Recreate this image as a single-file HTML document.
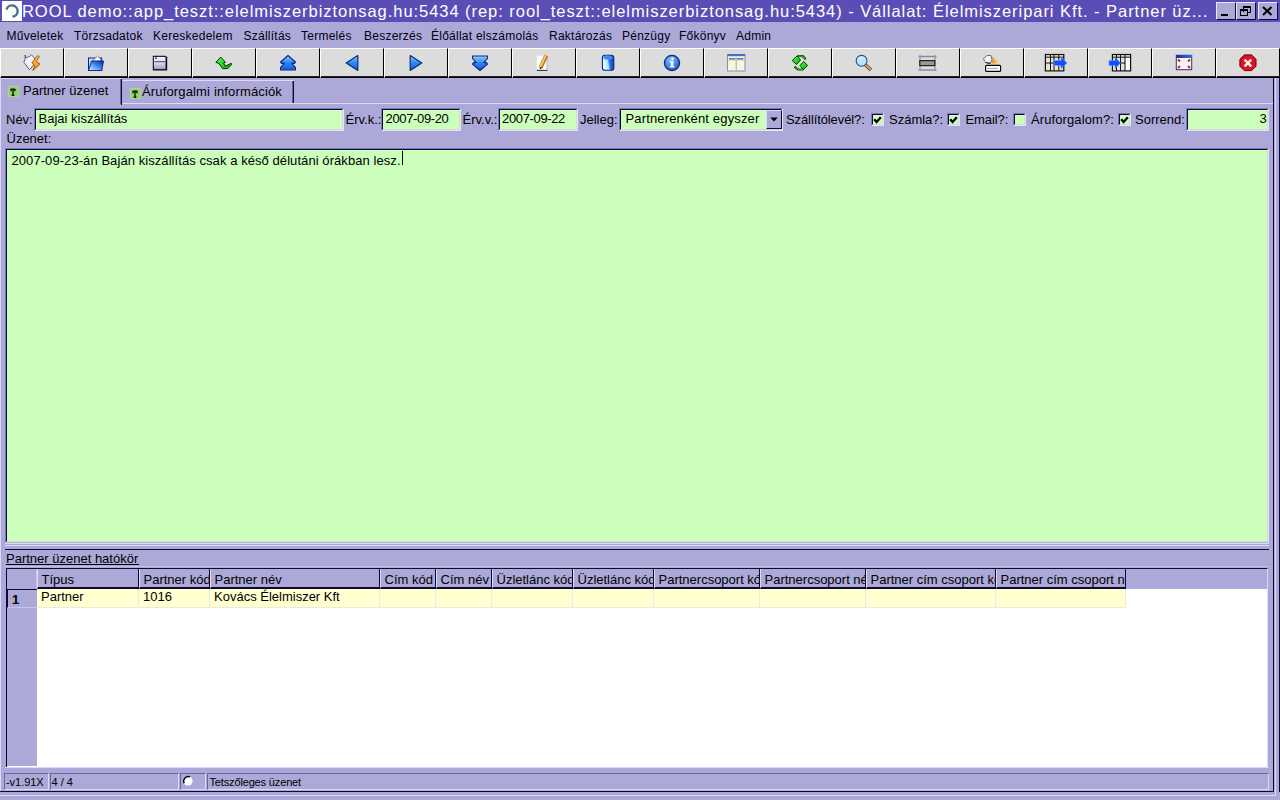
<!DOCTYPE html>
<html><head><meta charset="utf-8">
<style>
*{box-sizing:border-box;margin:0;padding:0}
html,body{width:1280px;height:800px;overflow:hidden;background:#aca8d8;font-family:"Liberation Sans",sans-serif;color:#000}
div{position:absolute}
svg{position:absolute}
.t{white-space:nowrap;line-height:1}
</style></head><body>
<div style="left:0px;top:0px;width:1280px;height:22px;background:#5a4eb6"></div>
<div style="left:2px;top:1px;width:20px;height:20px;background:#fbfdfb"></div>
<svg style="left:2px;top:1px" width="20" height="20"><path d="M4.6 8.6 A5.6 5.6 0 1 1 10.5 15.6" fill="none" stroke="#4f6f8f" stroke-width="2.4"/></svg>
<div class="t" style="left:22px;top:2.5px;font-size:16.5px;color:#fff;letter-spacing:0.95px">ROOL demo::app_teszt::elelmiszerbiztonsag.hu:5434 (rep: rool_teszt::elelmiszerbiztonsag.hu:5434) - Vállalat: Élelmiszeripari Kft. - Partner üz...</div>
<div style="left:1216px;top:2px;width:20px;height:18px;background:#aca8d8;border-top:1px solid #e8e6ff;border-left:1px solid #e8e6ff;border-right:1px solid #0c0a30;border-bottom:1px solid #0c0a30"></div>
<div style="left:1236px;top:2px;width:20px;height:18px;background:#aca8d8;border-top:1px solid #e8e6ff;border-left:1px solid #e8e6ff;border-right:1px solid #0c0a30;border-bottom:1px solid #0c0a30"></div>
<div style="left:1258px;top:2px;width:20px;height:18px;background:#aca8d8;border-top:1px solid #e8e6ff;border-left:1px solid #e8e6ff;border-right:1px solid #0c0a30;border-bottom:1px solid #0c0a30"></div>
<div style="left:1221px;top:14px;width:7px;height:2px;background:#000"></div>
<svg style="left:1240px;top:5px" width="12" height="12"><path d="M3.5 1v6 M3 1.5h7.5v6h-2.5 M3 2.5h7" fill="none" stroke="#000" stroke-width="1"/><rect x="0.5" y="4.5" width="7" height="6" fill="none" stroke="#000"/><path d="M0 5.5h8" stroke="#000"/></svg>
<svg style="left:1262px;top:6px" width="11" height="10"><path d="M1 1L9.5 9M9.5 1L1 9" stroke="#000" stroke-width="2"/></svg>
<div class="t" style="left:6.5px;top:30px;font-size:12px;letter-spacing:0.25px;color:#000010">Műveletek</div>
<div class="t" style="left:74px;top:30px;font-size:12px;letter-spacing:0.25px;color:#000010">Törzsadatok</div>
<div class="t" style="left:153px;top:30px;font-size:12px;letter-spacing:0.25px;color:#000010">Kereskedelem</div>
<div class="t" style="left:243.5px;top:30px;font-size:12px;letter-spacing:0.25px;color:#000010">Szállítás</div>
<div class="t" style="left:301px;top:30px;font-size:12px;letter-spacing:0.25px;color:#000010">Termelés</div>
<div class="t" style="left:364px;top:30px;font-size:12px;letter-spacing:0.25px;color:#000010">Beszerzés</div>
<div class="t" style="left:431px;top:30px;font-size:12px;letter-spacing:0.25px;color:#000010">Élőállat elszámolás</div>
<div class="t" style="left:549px;top:30px;font-size:12px;letter-spacing:0.25px;color:#000010">Raktározás</div>
<div class="t" style="left:622px;top:30px;font-size:12px;letter-spacing:0.25px;color:#000010">Pénzügy</div>
<div class="t" style="left:679px;top:30px;font-size:12px;letter-spacing:0.25px;color:#000010">Főkönyv</div>
<div class="t" style="left:736px;top:30px;font-size:12px;letter-spacing:0.25px;color:#000010">Admin</div>
<div style="left:0px;top:48px;width:64px;height:30px;background:#dcdcdc;border-top:1px solid #fff;border-left:1px solid #fff;border-right:1px solid #000;border-bottom:1px solid #000"></div>
<div style="left:1px;top:76px;width:63px;height:1px;background:#202020"></div>
<div style="left:64px;top:48px;width:64px;height:30px;background:#dcdcdc;border-top:1px solid #fff;border-left:1px solid #fff;border-right:1px solid #000;border-bottom:1px solid #000"></div>
<div style="left:65px;top:76px;width:63px;height:1px;background:#202020"></div>
<div style="left:128px;top:48px;width:64px;height:30px;background:#dcdcdc;border-top:1px solid #fff;border-left:1px solid #fff;border-right:1px solid #000;border-bottom:1px solid #000"></div>
<div style="left:129px;top:76px;width:63px;height:1px;background:#202020"></div>
<div style="left:192px;top:48px;width:64px;height:30px;background:#dcdcdc;border-top:1px solid #fff;border-left:1px solid #fff;border-right:1px solid #000;border-bottom:1px solid #000"></div>
<div style="left:193px;top:76px;width:63px;height:1px;background:#202020"></div>
<div style="left:256px;top:48px;width:64px;height:30px;background:#dcdcdc;border-top:1px solid #fff;border-left:1px solid #fff;border-right:1px solid #000;border-bottom:1px solid #000"></div>
<div style="left:257px;top:76px;width:63px;height:1px;background:#202020"></div>
<div style="left:320px;top:48px;width:64px;height:30px;background:#dcdcdc;border-top:1px solid #fff;border-left:1px solid #fff;border-right:1px solid #000;border-bottom:1px solid #000"></div>
<div style="left:321px;top:76px;width:63px;height:1px;background:#202020"></div>
<div style="left:384px;top:48px;width:64px;height:30px;background:#dcdcdc;border-top:1px solid #fff;border-left:1px solid #fff;border-right:1px solid #000;border-bottom:1px solid #000"></div>
<div style="left:385px;top:76px;width:63px;height:1px;background:#202020"></div>
<div style="left:448px;top:48px;width:64px;height:30px;background:#dcdcdc;border-top:1px solid #fff;border-left:1px solid #fff;border-right:1px solid #000;border-bottom:1px solid #000"></div>
<div style="left:449px;top:76px;width:63px;height:1px;background:#202020"></div>
<div style="left:512px;top:48px;width:64px;height:30px;background:#dcdcdc;border-top:1px solid #fff;border-left:1px solid #fff;border-right:1px solid #000;border-bottom:1px solid #000"></div>
<div style="left:513px;top:76px;width:63px;height:1px;background:#202020"></div>
<div style="left:576px;top:48px;width:64px;height:30px;background:#dcdcdc;border-top:1px solid #fff;border-left:1px solid #fff;border-right:1px solid #000;border-bottom:1px solid #000"></div>
<div style="left:577px;top:76px;width:63px;height:1px;background:#202020"></div>
<div style="left:640px;top:48px;width:64px;height:30px;background:#dcdcdc;border-top:1px solid #fff;border-left:1px solid #fff;border-right:1px solid #000;border-bottom:1px solid #000"></div>
<div style="left:641px;top:76px;width:63px;height:1px;background:#202020"></div>
<div style="left:704px;top:48px;width:64px;height:30px;background:#dcdcdc;border-top:1px solid #fff;border-left:1px solid #fff;border-right:1px solid #000;border-bottom:1px solid #000"></div>
<div style="left:705px;top:76px;width:63px;height:1px;background:#202020"></div>
<div style="left:768px;top:48px;width:64px;height:30px;background:#dcdcdc;border-top:1px solid #fff;border-left:1px solid #fff;border-right:1px solid #000;border-bottom:1px solid #000"></div>
<div style="left:769px;top:76px;width:63px;height:1px;background:#202020"></div>
<div style="left:832px;top:48px;width:64px;height:30px;background:#dcdcdc;border-top:1px solid #fff;border-left:1px solid #fff;border-right:1px solid #000;border-bottom:1px solid #000"></div>
<div style="left:833px;top:76px;width:63px;height:1px;background:#202020"></div>
<div style="left:896px;top:48px;width:64px;height:30px;background:#dcdcdc;border-top:1px solid #fff;border-left:1px solid #fff;border-right:1px solid #000;border-bottom:1px solid #000"></div>
<div style="left:897px;top:76px;width:63px;height:1px;background:#202020"></div>
<div style="left:960px;top:48px;width:64px;height:30px;background:#dcdcdc;border-top:1px solid #fff;border-left:1px solid #fff;border-right:1px solid #000;border-bottom:1px solid #000"></div>
<div style="left:961px;top:76px;width:63px;height:1px;background:#202020"></div>
<div style="left:1024px;top:48px;width:64px;height:30px;background:#dcdcdc;border-top:1px solid #fff;border-left:1px solid #fff;border-right:1px solid #000;border-bottom:1px solid #000"></div>
<div style="left:1025px;top:76px;width:63px;height:1px;background:#202020"></div>
<div style="left:1088px;top:48px;width:64px;height:30px;background:#dcdcdc;border-top:1px solid #fff;border-left:1px solid #fff;border-right:1px solid #000;border-bottom:1px solid #000"></div>
<div style="left:1089px;top:76px;width:63px;height:1px;background:#202020"></div>
<div style="left:1152px;top:48px;width:64px;height:30px;background:#dcdcdc;border-top:1px solid #fff;border-left:1px solid #fff;border-right:1px solid #000;border-bottom:1px solid #000"></div>
<div style="left:1153px;top:76px;width:63px;height:1px;background:#202020"></div>
<div style="left:1216px;top:48px;width:64px;height:30px;background:#dcdcdc;border-top:1px solid #fff;border-left:1px solid #fff;border-right:1px solid #000;border-bottom:1px solid #000"></div>
<div style="left:1217px;top:76px;width:63px;height:1px;background:#202020"></div>
<svg style="left:0;top:0;width:0;height:0"><defs><linearGradient id="gblue" x1="0" y1="0" x2="0" y2="1"><stop offset="0" stop-color="#8cd0ff"/><stop offset="0.5" stop-color="#2a86f0"/><stop offset="1" stop-color="#1a5ad8"/></linearGradient><linearGradient id="gfold" x1="0" y1="1" x2="1" y2="0"><stop offset="0" stop-color="#d0f8ff"/><stop offset="0.55" stop-color="#4080f0"/><stop offset="1" stop-color="#0020b0"/></linearGradient><linearGradient id="gflop" x1="0" y1="0" x2="0" y2="1"><stop offset="0" stop-color="#f4f4ff"/><stop offset="0.5" stop-color="#d8d8f0"/><stop offset="1" stop-color="#a0a0c0"/></linearGradient><linearGradient id="gdb" x1="0" y1="0.2" x2="1" y2="0"><stop offset="0" stop-color="#e8ffff"/><stop offset="0.4" stop-color="#a8e4ff"/><stop offset="0.55" stop-color="#3070e8"/><stop offset="1" stop-color="#0030c0"/></linearGradient><radialGradient id="ginfo" cx="0.4" cy="0.3" r="0.7"><stop offset="0" stop-color="#80c8ff"/><stop offset="1" stop-color="#1a58d0"/></radialGradient><linearGradient id="gwin" x1="0" y1="0" x2="1" y2="0"><stop offset="0" stop-color="#1030a0"/><stop offset="1" stop-color="#3070e0"/></linearGradient><linearGradient id="gbolt" x1="0" y1="0" x2="0" y2="1"><stop offset="0" stop-color="#f8d040"/><stop offset="1" stop-color="#f08010"/></linearGradient><linearGradient id="ggreen" x1="0" y1="0" x2="1" y2="1"><stop offset="0" stop-color="#50ff50"/><stop offset="1" stop-color="#00b000"/></linearGradient><linearGradient id="gdish" x1="0" y1="0" x2="1" y2="0"><stop offset="0" stop-color="#f09030"/><stop offset="1" stop-color="#f8e8c0"/></linearGradient></defs></svg>
<svg style="left:0px;top:48px" width="64" height="29" viewBox="0 0 64 29"><path d="M25.2 7 L25.7 10 L29.6 8.4 L31.4 6.9 L34.6 10 L34 16.5 L29.6 21.8 L23.9 14.4 L25.2 10.6 Z" fill="#f2f2fc" stroke="#50506a" stroke-width="0.9" stroke-linejoin="round"/><path d="M37.6 7.6 L39.4 8.4 L36.3 13.6 L40.2 16 L32.8 22.6 L34.6 17.6 L31.8 15 Z" fill="url(#gbolt)" stroke="#a04000" stroke-width="0.8" stroke-linejoin="round"/></svg>
<svg style="left:64px;top:48px" width="64" height="29" viewBox="0 0 64 29"><rect x="24.5" y="10" width="13.2" height="12.5" fill="#b8e4ff" stroke="#102080" stroke-width="1"/><path d="M28 13.2 L33.5 8.1 L37 11.5 L36 13.2z" fill="#fafaff" stroke="#605878" stroke-width="0.7"/><path d="M27.5 13 h12 l-1.8 9.5 h-13.2z" fill="url(#gfold)" stroke="#102080" stroke-width="0.9" stroke-linejoin="round"/></svg>
<svg style="left:128px;top:48px" width="64" height="29" viewBox="0 0 64 29"><path d="M24.8 7.8 h13 l1.4 1.4 v13.2 h-14.4z" fill="#10101c"/><rect x="25.9" y="8.9" width="11.6" height="12.2" fill="url(#gflop)"/><path d="M26.5 13.7h10.5" stroke="#505070" stroke-width="1.1"/><circle cx="28" cy="10.2" r="0.9" fill="#303040"/></svg>
<svg style="left:192px;top:48px" width="64" height="29" viewBox="0 0 64 29"><path d="M28.7 9 L33.5 14.4 L31.6 14.8 L33 18.2 L39.3 15.3 L39.7 16.6 L35.6 20.6 L30.4 20.6 L27 15.5 L23.9 14.4 Z" fill="url(#ggreen)" stroke="#003a00" stroke-width="1" stroke-linejoin="round"/></svg>
<svg style="left:256px;top:48px" width="64" height="29" viewBox="0 0 64 29"><path d="M32 7.5 L39.5 14 L38.5 15.4 L35.8 15.4 L39.5 19.6 L39.5 22 L24.5 22 L24.5 19.6 L28.2 15.4 L25.5 15.4 L24.5 14 Z" fill="url(#gblue)" stroke="#0a2a78" stroke-width="1.1" stroke-linejoin="round"/></svg>
<svg style="left:320px;top:48px" width="64" height="29" viewBox="0 0 64 29"><path d="M26.2 15 L37.8 7.6 L37.8 22.4 Z" fill="url(#gblue)" stroke="#0a2a78" stroke-width="1.2" stroke-linejoin="round"/></svg>
<svg style="left:384px;top:48px" width="64" height="29" viewBox="0 0 64 29"><path d="M26.2 7.6 L37.8 15 L26.2 22.4 Z" fill="url(#gblue)" stroke="#0a2a78" stroke-width="1.2" stroke-linejoin="round"/></svg>
<svg style="left:448px;top:48px" width="64" height="29" viewBox="0 0 64 29"><path d="M32 22.5 L39.5 16 L38.5 14.6 L35.8 14.6 L39.5 10.4 L39.5 8 L24.5 8 L24.5 10.4 L28.2 14.6 L25.5 14.6 L24.5 16 Z" fill="url(#gblue)" stroke="#0a2a78" stroke-width="1.1" stroke-linejoin="round"/></svg>
<svg style="left:512px;top:48px" width="64" height="29" viewBox="0 0 64 29"><rect x="24.8" y="7.8" width="10.8" height="14.7" fill="#fcfcff"/><path d="M24.8 22.4h10.8" stroke="#303040" stroke-width="1.1"/><path d="M35.1 8v14.5" stroke="#a8b0c8" stroke-width="1"/><path d="M34.3 7.4 L28.6 19.6" stroke="#c07810" stroke-width="4"/><path d="M33.8 7.4 L28.1 19.4" stroke="#f8d070" stroke-width="1.8"/><path d="M29 19.2 L28.2 20.8" stroke="#403020" stroke-width="1.8"/></svg>
<svg style="left:576px;top:48px" width="64" height="29" viewBox="0 0 64 29"><rect x="26.4" y="7.3" width="11.4" height="15" rx="2.6" ry="2.6" fill="url(#gdb)" stroke="#0a2a78" stroke-width="1.1"/><ellipse cx="32" cy="9.6" rx="4.6" ry="2.2" fill="#3a8ef0"/></svg>
<svg style="left:640px;top:48px" width="64" height="29" viewBox="0 0 64 29"><circle cx="32" cy="15" r="7.6" fill="url(#ginfo)" stroke="#0a2a78" stroke-width="1.2"/><circle cx="32.6" cy="10.8" r="1.4" fill="#fff"/><path d="M30.2 13h3.2v5.3h1.1v1.3h-4.8v-1.3h1.1v-4h-0.6z" fill="#fff"/></svg>
<svg style="left:704px;top:48px" width="64" height="29" viewBox="0 0 64 29"><rect x="23.5" y="6.5" width="17.5" height="16.5" fill="#f6f6e0" stroke="#8890a8" stroke-width="1"/><rect x="23.5" y="6" width="17.5" height="2.2" fill="#4070d0"/><path d="M25 10.8h6.5M33 10.8h6.5" stroke="#405070" stroke-width="1.2"/><path d="M24 12h16.5" stroke="#e0a0a0" stroke-width="0.6"/><path d="M32.2 9v13.5" stroke="#a0a8b8" stroke-width="1"/></svg>
<svg style="left:768px;top:48px" width="64" height="29" viewBox="0 0 64 29"><path d="M29 8 L35 8.2 L37.7 11.4" fill="none" stroke="#003a00" stroke-width="2.2" stroke-linejoin="round"/><path d="M29 8 L35 8.2 L37.5 11.2" fill="none" stroke="#30e030" stroke-width="0.9"/><path d="M24.2 12.6 L29 8 L32.5 12 L28.5 16.5 Z" fill="url(#ggreen)" stroke="#003a00" stroke-width="1" stroke-linejoin="round"/><path d="M35.5 21.5 L30 21.5 L26.5 18.6" fill="none" stroke="#003a00" stroke-width="2.2" stroke-linejoin="round"/><path d="M35.5 21.3 L30.2 21.3 L26.8 18.6" fill="none" stroke="#30e030" stroke-width="0.9"/><path d="M39.6 17.5 L35.7 13.5 L32 17.5 L35.5 21.6 Z" fill="url(#ggreen)" stroke="#003a00" stroke-width="1" stroke-linejoin="round"/></svg>
<svg style="left:832px;top:48px" width="64" height="29" viewBox="0 0 64 29"><path d="M33.5 17 L39 22" stroke="#503010" stroke-width="3.4"/><path d="M33.5 17 L39 22" stroke="#e0a050" stroke-width="2"/><circle cx="29.6" cy="12.8" r="5.4" fill="#b8e4ff" stroke="#305080" stroke-width="1.1"/><path d="M27 11 A3 3 0 0 1 30 9.5" stroke="#fff" stroke-width="1" fill="none"/></svg>
<svg style="left:896px;top:48px" width="64" height="29" viewBox="0 0 64 29"><path d="M22.5 8.5h18M22.5 22h18" stroke="#8a86a8" stroke-width="1.6"/><path d="M24 7v16M39 7v16" stroke="#9490b0" stroke-width="1.2"/><rect x="23.8" y="12.6" width="15" height="5" fill="#9a9a90" stroke="#202020" stroke-width="1.2"/></svg>
<svg style="left:960px;top:48px" width="64" height="29" viewBox="0 0 64 29"><path d="M23.5 10.5 Q25 16 30.5 15.3 Q33 12 31 7.5 Q27 6 23.5 10.5z" fill="#f4f4f8" stroke="#606070" stroke-width="0.9"/><path d="M25.5 14.5 L30.5 15.3" stroke="#303040" stroke-width="1.2"/><path d="M32 8.5 L32 15.5 L40 15.5 Z" fill="url(#gdish)"/><rect x="25.6" y="17.4" width="15" height="6" rx="1" fill="#fff" stroke="#000" stroke-width="1.1"/><path d="M27.5 20.4h10.5" stroke="#404040" stroke-width="1" stroke-dasharray="1 1"/></svg>
<svg style="left:1024px;top:48px" width="64" height="29" viewBox="0 0 64 29"><rect x="21.4" y="6.5" width="18.4" height="16.4" fill="#e8e4d4" stroke="#101010" stroke-width="1.2"/><path d="M26.5 6.5v16.4M30 6.5v16.4M34.8 6.5v16.4M21.4 9.2h18.4M21.4 15h18.4" stroke="#101010" stroke-width="1"/><path d="M30 12.5h7v-3.2l6 5.7-6 5.7v-3.2h-7z" fill="#1050ff" stroke="#70a0ff" stroke-width="0.6"/></svg>
<svg style="left:1088px;top:48px" width="64" height="29" viewBox="0 0 64 29"><rect x="24.4" y="6.5" width="18.2" height="16.4" fill="#e8e4d4" stroke="#101010" stroke-width="1.2"/><rect x="37.5" y="9.5" width="4.5" height="12.5" fill="#ffffff"/><path d="M28.5 6.5v16.4M32.5 6.5v16.4M37 6.5v16.4M24.4 9.2h18.2M24.4 15h13" stroke="#101010" stroke-width="1"/><path d="M21 12.5h6v-3.2l5.5 5.7-5.5 5.7v-3.2h-6z" fill="#1050ff" stroke="#70a0ff" stroke-width="0.6"/></svg>
<svg style="left:1152px;top:48px" width="64" height="29" viewBox="0 0 64 29"><rect x="24.3" y="7.3" width="15.4" height="14.4" fill="#fff4f4" stroke="#303070" stroke-width="1"/><rect x="24.3" y="7" width="15.4" height="3" fill="url(#gwin)"/><path d="M26 11.5l2 2M38 11.5l-2 2M26 20l2-2M38 20l-2-2" stroke="#a03030" stroke-width="1.8"/></svg>
<svg style="left:1216px;top:48px" width="64" height="29" viewBox="0 0 64 29"><path d="M28.4 6.9h7.2l4.4 4.4v7l-4.4 4.3h-7.2l-4.5-4.3v-7z" fill="#e01020" stroke="#600010" stroke-width="1"/><path d="M28.6 11.6l6.6 6.8M35.2 11.6l-6.6 6.8" stroke="#fff4f0" stroke-width="2.5"/></svg>
<div style="left:122px;top:80px;width:172px;height:24px;background:#aca8d8;border-top:1px solid #dcd8ff"></div>
<div style="left:293px;top:81px;width:1px;height:22px;background:#0c0a30"></div>
<div style="left:292px;top:81px;width:1px;height:22px;background:#6a64a8"></div>
<div style="left:0px;top:78px;width:122px;height:27px;background:#aca8d8;border-top:1px solid #dcd8ff;border-left:1px solid #dcd8ff"></div>
<div style="left:121px;top:79px;width:1px;height:26px;background:#0c0a30"></div>
<div style="left:120px;top:79px;width:1px;height:25px;background:#6a64a8"></div>
<div style="left:7.5px;top:86px;width:11px;height:11px;background:#a8d890;border-radius:2px;box-shadow:0 0 1px #a8d890"></div>
<div style="left:8.5px;top:87px;width:9px;height:9px;background:#98d070"></div>
<svg style="left:8px;top:86.5px" width="10" height="10"><path d="M2.6 2.2h4.8M3.1 2v2.2M6.9 2v2.2M5 2.2v6.2M3.6 8.3h2.8" stroke="#002000" stroke-width="1.4" fill="none"/></svg>
<div class="t" style="left:23px;top:83.5px;font-size:13px;">Partner üzenet</div>
<div style="left:129.5px;top:88px;width:11px;height:11px;background:#a8d890;border-radius:2px;box-shadow:0 0 1px #a8d890"></div>
<div style="left:130.5px;top:89px;width:9px;height:9px;background:#98d070"></div>
<svg style="left:130px;top:88.5px" width="10" height="10"><path d="M2.6 2.2h4.8M3.1 2v2.2M6.9 2v2.2M5 2.2v6.2M3.6 8.3h2.8" stroke="#002000" stroke-width="1.4" fill="none"/></svg>
<div class="t" style="left:142px;top:85.3px;font-size:13px;letter-spacing:0.15px">Áruforgalmi információk</div>
<div style="left:122px;top:103px;width:1151px;height:1px;background:#dcd8ff"></div>
<div style="left:0px;top:78px;width:1px;height:713px;background:#dcd8ff"></div>
<div style="left:1273px;top:78px;width:1px;height:714px;background:#0c0a30"></div>
<div style="left:1275px;top:78px;width:1px;height:718px;background:#dcd8ff"></div>
<div style="left:1279px;top:78px;width:1px;height:714px;background:#0c0a30"></div>
<div style="left:0px;top:791px;width:1274px;height:1px;background:#0c0a30"></div>
<div style="left:0px;top:795px;width:1276px;height:1px;background:#dcd8ff"></div>
<div class="t" style="left:6px;top:112.5px;font-size:13px;">Név:</div>
<div style="left:34px;top:108px;width:310px;height:23px;background:#ccffbb;border-top:1px solid #7c76bc;border-left:1px solid #7c76bc;border-right:1px solid #e4e2ff;border-bottom:1px solid #e4e2ff"></div>
<div style="left:35px;top:109px;width:308px;height:21px;background:#ccffbb;border-top:1px solid #0c0a30;border-left:1px solid #0c0a30;border-right:1px solid #d4dcd0;border-bottom:1px solid #d4dcd0"></div>
<div class="t" style="left:38.5px;top:112px;font-size:13px;">Bajai kiszállítás</div>
<div class="t" style="left:345.5px;top:112.5px;font-size:13px;">Érv.k.:</div>
<div style="left:381px;top:108px;width:80px;height:23px;background:#ccffbb;border-top:1px solid #7c76bc;border-left:1px solid #7c76bc;border-right:1px solid #e4e2ff;border-bottom:1px solid #e4e2ff"></div>
<div style="left:382px;top:109px;width:78px;height:21px;background:#ccffbb;border-top:1px solid #0c0a30;border-left:1px solid #0c0a30;border-right:1px solid #d4dcd0;border-bottom:1px solid #d4dcd0"></div>
<div class="t" style="left:385.5px;top:112px;font-size:13px;letter-spacing:-0.35px">2007-09-20</div>
<div class="t" style="left:462.5px;top:112.5px;font-size:13px;">Érv.v.:</div>
<div style="left:498px;top:108px;width:80px;height:23px;background:#ccffbb;border-top:1px solid #7c76bc;border-left:1px solid #7c76bc;border-right:1px solid #e4e2ff;border-bottom:1px solid #e4e2ff"></div>
<div style="left:499px;top:109px;width:78px;height:21px;background:#ccffbb;border-top:1px solid #0c0a30;border-left:1px solid #0c0a30;border-right:1px solid #d4dcd0;border-bottom:1px solid #d4dcd0"></div>
<div class="t" style="left:502px;top:112px;font-size:13px;letter-spacing:-0.35px">2007-09-22</div>
<div class="t" style="left:580px;top:112.5px;font-size:13px;">Jelleg:</div>
<div style="left:619px;top:108px;width:164px;height:23px;background:#ccffbb;border-top:1px solid #7c76bc;border-left:1px solid #7c76bc;border-right:1px solid #e4e2ff;border-bottom:1px solid #e4e2ff"></div>
<div style="left:620px;top:109px;width:162px;height:21px;background:#ccffbb;border-top:1px solid #0c0a30;border-left:1px solid #0c0a30;border-right:1px solid #d4dcd0;border-bottom:1px solid #d4dcd0"></div>
<div class="t" style="left:625.5px;top:112px;font-size:13px;letter-spacing:0.15px">Partnerenként egyszer</div>
<div style="left:766px;top:110px;width:16px;height:19px;background:#aca8d8;border-top:1px solid #dcd8ff;border-left:1px solid #dcd8ff;border-right:1px solid #0c0a30;border-bottom:1px solid #0c0a30"></div>
<svg style="left:769.5px;top:116.5px" width="9" height="6"><path d="M0.2 0.5h7.6l-3.8 4z" fill="#000"/></svg>
<div class="t" style="left:786px;top:112.5px;font-size:13px;letter-spacing:-0.1px">Szállítólevél?:</div>
<div style="left:871px;top:112.5px;width:13px;height:13px;background:#ccffbb;border-top:1px solid #7c76bc;border-left:1px solid #7c76bc;border-right:1px solid #e4e2ff;border-bottom:1px solid #e4e2ff"></div>
<div style="left:872px;top:113.5px;width:11px;height:11px;background:#ccffbb;border-top:1px solid #0c0a30;border-left:1px solid #0c0a30;border-right:1px solid #d4dcd0;border-bottom:1px solid #d4dcd0"></div>
<svg style="left:871px;top:112.5px" width="13" height="13"><path d="M3.2 6.2 L5.6 9 L9.8 4.2" stroke="#000" stroke-width="2.3" fill="none"/></svg>
<div class="t" style="left:889px;top:112.5px;font-size:13px;">Számla?:</div>
<div style="left:947px;top:112.5px;width:13px;height:13px;background:#ccffbb;border-top:1px solid #7c76bc;border-left:1px solid #7c76bc;border-right:1px solid #e4e2ff;border-bottom:1px solid #e4e2ff"></div>
<div style="left:948px;top:113.5px;width:11px;height:11px;background:#ccffbb;border-top:1px solid #0c0a30;border-left:1px solid #0c0a30;border-right:1px solid #d4dcd0;border-bottom:1px solid #d4dcd0"></div>
<svg style="left:947px;top:112.5px" width="13" height="13"><path d="M3.2 6.2 L5.6 9 L9.8 4.2" stroke="#000" stroke-width="2.3" fill="none"/></svg>
<div class="t" style="left:965.5px;top:112.5px;font-size:13px;letter-spacing:-0.1px">Email?:</div>
<div style="left:1013px;top:112.5px;width:13px;height:13px;background:#ccffbb;border-top:1px solid #7c76bc;border-left:1px solid #7c76bc;border-right:1px solid #e4e2ff;border-bottom:1px solid #e4e2ff"></div>
<div style="left:1014px;top:113.5px;width:11px;height:11px;background:#ccffbb;border-top:1px solid #0c0a30;border-left:1px solid #0c0a30;border-right:1px solid #d4dcd0;border-bottom:1px solid #d4dcd0"></div>
<div class="t" style="left:1031px;top:112.5px;font-size:13px;letter-spacing:0.1px">Áruforgalom?:</div>
<div style="left:1118px;top:112.5px;width:13px;height:13px;background:#ccffbb;border-top:1px solid #7c76bc;border-left:1px solid #7c76bc;border-right:1px solid #e4e2ff;border-bottom:1px solid #e4e2ff"></div>
<div style="left:1119px;top:113.5px;width:11px;height:11px;background:#ccffbb;border-top:1px solid #0c0a30;border-left:1px solid #0c0a30;border-right:1px solid #d4dcd0;border-bottom:1px solid #d4dcd0"></div>
<svg style="left:1118px;top:112.5px" width="13" height="13"><path d="M3.2 6.2 L5.6 9 L9.8 4.2" stroke="#000" stroke-width="2.3" fill="none"/></svg>
<div class="t" style="left:1135px;top:112.5px;font-size:13px;">Sorrend:</div>
<div style="left:1186px;top:108px;width:83px;height:23px;background:#ccffbb;border-top:1px solid #7c76bc;border-left:1px solid #7c76bc;border-right:1px solid #e4e2ff;border-bottom:1px solid #e4e2ff"></div>
<div style="left:1187px;top:109px;width:81px;height:21px;background:#ccffbb;border-top:1px solid #0c0a30;border-left:1px solid #0c0a30;border-right:1px solid #d4dcd0;border-bottom:1px solid #d4dcd0"></div>
<div class="t" style="left:1259.5px;top:112px;font-size:13px;">3</div>
<div class="t" style="left:6.5px;top:132px;font-size:13px;">Üzenet:</div>
<div style="left:5px;top:148px;width:1264px;height:395px;background:#ccffbb;border-top:1px solid #7c76bc;border-left:1px solid #7c76bc;border-right:1px solid #e4e2ff;border-bottom:1px solid #e4e2ff"></div>
<div style="left:6px;top:149px;width:1262px;height:393px;background:#ccffbb;border-top:1px solid #0c0a30;border-left:1px solid #0c0a30;border-right:1px solid #d4dcd0;border-bottom:1px solid #d4dcd0"></div>
<div style="left:5px;top:542px;width:1264px;height:1px;background:#b8bcd0"></div>
<div style="left:5px;top:543px;width:1264px;height:1px;background:#d8d8ff"></div>
<div class="t" style="left:11.5px;top:153.5px;font-size:13px;letter-spacing:0.07px">2007-09-23-án Baján kiszállítás csak a késő délutáni órákban lesz.</div>
<div style="left:402px;top:151px;width:1px;height:14px;background:#000"></div>
<div style="left:5px;top:545px;width:1264px;height:1px;background:#dcd8ff"></div>
<div style="left:5px;top:549px;width:1264px;height:1px;background:#0c0a30"></div>
<div class="t" style="left:6px;top:551.5px;font-size:13px;">Partner üzenet hatókör</div>
<div style="left:6px;top:564px;width:133px;height:1px;background:#000"></div>
<div style="left:5px;top:566px;width:1264px;height:1px;background:#c4c0ec"></div>
<div style="left:6px;top:568px;width:1262px;height:200px;background:#fff;border-top:1px solid #0c0a30;border-left:1px solid #0c0a30;border-right:1px solid #dcd8ff;border-bottom:1px solid #dcd8ff"></div>
<div style="left:7px;top:569px;width:1260px;height:20px;background:#aca8d8"></div>
<div style="left:7px;top:589px;width:30px;height:177px;background:#aca8d8"></div>
<div style="left:36px;top:569px;width:1px;height:20px;background:#c8c4f0"></div>
<div style="left:7px;top:589px;width:30px;height:19px;border-top:1px solid #0c0a30;border-left:1px solid #0c0a30;border-bottom:1px solid #c8c4f0"></div>
<div class="t" style="left:12px;top:592.5px;font-size:13px;font-weight:bold">1</div>
<div style="left:37px;top:569px;width:102px;height:20px;border-left:1px solid #dcd8ff;border-right:1px solid #0c0a30;border-bottom:2px solid #0c0a30;overflow:hidden"><div class="t" style="left:3.5px;top:4px;font-size:13px">Típus</div></div>
<div style="left:37px;top:589px;width:102px;height:19px;background:#ffffd0;border-right:1px solid #eceadc;border-bottom:1px solid #eceadc;overflow:hidden"><div class="t" style="left:4px;top:1px;font-size:13px">Partner</div></div>
<div style="left:139px;top:569px;width:71px;height:20px;border-left:1px solid #dcd8ff;border-right:1px solid #0c0a30;border-bottom:2px solid #0c0a30;overflow:hidden"><div class="t" style="left:3.5px;top:4px;font-size:13px">Partner kód</div></div>
<div style="left:139px;top:589px;width:71px;height:19px;background:#ffffd0;border-right:1px solid #eceadc;border-bottom:1px solid #eceadc;overflow:hidden"><div class="t" style="left:4px;top:1px;font-size:13px">1016</div></div>
<div style="left:210px;top:569px;width:170px;height:20px;border-left:1px solid #dcd8ff;border-right:1px solid #0c0a30;border-bottom:2px solid #0c0a30;overflow:hidden"><div class="t" style="left:3.5px;top:4px;font-size:13px">Partner név</div></div>
<div style="left:210px;top:589px;width:170px;height:19px;background:#ffffd0;border-right:1px solid #eceadc;border-bottom:1px solid #eceadc;overflow:hidden"><div class="t" style="left:4px;top:1px;font-size:13px">Kovács Élelmiszer Kft</div></div>
<div style="left:380px;top:569px;width:56px;height:20px;border-left:1px solid #dcd8ff;border-right:1px solid #0c0a30;border-bottom:2px solid #0c0a30;overflow:hidden"><div class="t" style="left:3.5px;top:4px;font-size:13px">Cím kód</div></div>
<div style="left:380px;top:589px;width:56px;height:19px;background:#ffffd0;border-right:1px solid #eceadc;border-bottom:1px solid #eceadc;overflow:hidden"><div class="t" style="left:4px;top:1px;font-size:13px"></div></div>
<div style="left:436px;top:569px;width:56px;height:20px;border-left:1px solid #dcd8ff;border-right:1px solid #0c0a30;border-bottom:2px solid #0c0a30;overflow:hidden"><div class="t" style="left:3.5px;top:4px;font-size:13px">Cím név</div></div>
<div style="left:436px;top:589px;width:56px;height:19px;background:#ffffd0;border-right:1px solid #eceadc;border-bottom:1px solid #eceadc;overflow:hidden"><div class="t" style="left:4px;top:1px;font-size:13px"></div></div>
<div style="left:492px;top:569px;width:81px;height:20px;border-left:1px solid #dcd8ff;border-right:1px solid #0c0a30;border-bottom:2px solid #0c0a30;overflow:hidden"><div class="t" style="left:3.5px;top:4px;font-size:13px">Üzletlánc kód</div></div>
<div style="left:492px;top:589px;width:81px;height:19px;background:#ffffd0;border-right:1px solid #eceadc;border-bottom:1px solid #eceadc;overflow:hidden"><div class="t" style="left:4px;top:1px;font-size:13px"></div></div>
<div style="left:573px;top:569px;width:81px;height:20px;border-left:1px solid #dcd8ff;border-right:1px solid #0c0a30;border-bottom:2px solid #0c0a30;overflow:hidden"><div class="t" style="left:3.5px;top:4px;font-size:13px">Üzletlánc kód</div></div>
<div style="left:573px;top:589px;width:81px;height:19px;background:#ffffd0;border-right:1px solid #eceadc;border-bottom:1px solid #eceadc;overflow:hidden"><div class="t" style="left:4px;top:1px;font-size:13px"></div></div>
<div style="left:654px;top:569px;width:106px;height:20px;border-left:1px solid #dcd8ff;border-right:1px solid #0c0a30;border-bottom:2px solid #0c0a30;overflow:hidden"><div class="t" style="left:3.5px;top:4px;font-size:13px">Partnercsoport kód</div></div>
<div style="left:654px;top:589px;width:106px;height:19px;background:#ffffd0;border-right:1px solid #eceadc;border-bottom:1px solid #eceadc;overflow:hidden"><div class="t" style="left:4px;top:1px;font-size:13px"></div></div>
<div style="left:760px;top:569px;width:106px;height:20px;border-left:1px solid #dcd8ff;border-right:1px solid #0c0a30;border-bottom:2px solid #0c0a30;overflow:hidden"><div class="t" style="left:3.5px;top:4px;font-size:13px">Partnercsoport név</div></div>
<div style="left:760px;top:589px;width:106px;height:19px;background:#ffffd0;border-right:1px solid #eceadc;border-bottom:1px solid #eceadc;overflow:hidden"><div class="t" style="left:4px;top:1px;font-size:13px"></div></div>
<div style="left:866px;top:569px;width:130px;height:20px;border-left:1px solid #dcd8ff;border-right:1px solid #0c0a30;border-bottom:2px solid #0c0a30;overflow:hidden"><div class="t" style="left:3.5px;top:4px;font-size:13px">Partner cím csoport kód</div></div>
<div style="left:866px;top:589px;width:130px;height:19px;background:#ffffd0;border-right:1px solid #eceadc;border-bottom:1px solid #eceadc;overflow:hidden"><div class="t" style="left:4px;top:1px;font-size:13px"></div></div>
<div style="left:996px;top:569px;width:130px;height:20px;border-left:1px solid #dcd8ff;border-right:1px solid #0c0a30;border-bottom:2px solid #0c0a30;overflow:hidden"><div class="t" style="left:3.5px;top:4px;font-size:13px">Partner cím csoport név</div></div>
<div style="left:996px;top:589px;width:130px;height:19px;background:#ffffd0;border-right:1px solid #eceadc;border-bottom:1px solid #eceadc;overflow:hidden"><div class="t" style="left:4px;top:1px;font-size:13px"></div></div>
<div style="left:5px;top:767px;width:1264px;height:1px;background:#dcd8ff"></div>
<div style="left:4px;top:773px;width:45px;height:17px;border-top:1px solid #6a64a8;border-left:1px solid #6a64a8;border-right:1px solid #dcd8ff;border-bottom:1px solid #dcd8ff"></div>
<div class="t" style="left:6px;top:776.5px;font-size:11px;letter-spacing:-0.05px">-v1.91X</div>
<div style="left:50px;top:773px;width:129px;height:17px;border-top:1px solid #6a64a8;border-left:1px solid #6a64a8;border-right:1px solid #dcd8ff;border-bottom:1px solid #dcd8ff"></div>
<div class="t" style="left:51.5px;top:776.5px;font-size:11px;">4 / 4</div>
<div style="left:180px;top:773px;width:26px;height:17px;border-top:1px solid #6a64a8;border-left:1px solid #6a64a8;border-right:1px solid #dcd8ff;border-bottom:1px solid #dcd8ff"></div>
<svg style="left:182px;top:775px" width="12" height="12"><circle cx="6" cy="6" r="4.6" fill="#fff"/><path d="M2.2 8.2 A4.6 4.6 0 0 1 8 1.9" stroke="#000" stroke-width="1.4" fill="none"/></svg>
<div style="left:207px;top:773px;width:1062px;height:17px;border-top:1px solid #6a64a8;border-left:1px solid #6a64a8;border-right:1px solid #dcd8ff;border-bottom:1px solid #dcd8ff"></div>
<div class="t" style="left:209.5px;top:776.5px;font-size:11px;letter-spacing:-0.15px">Tetszőleges üzenet</div>
</body></html>
